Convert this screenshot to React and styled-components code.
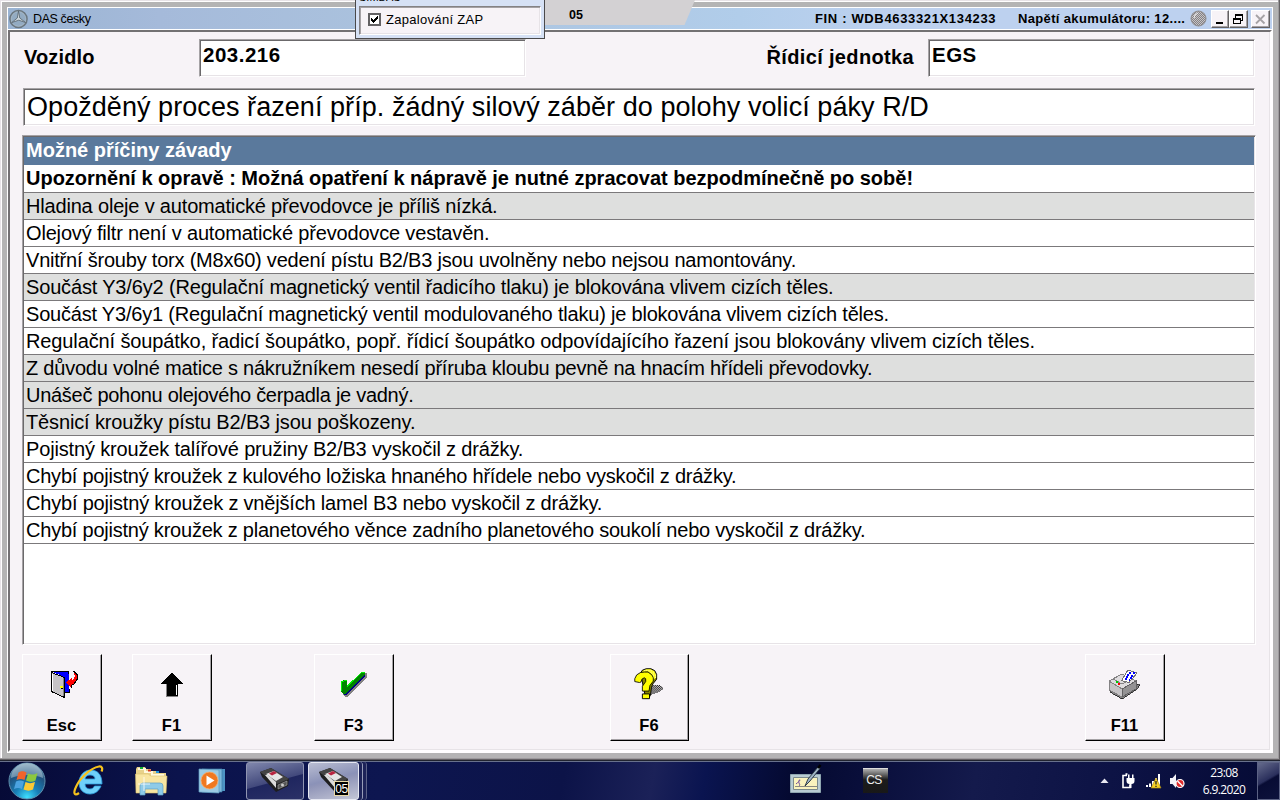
import React from 'react';
import styled, { createGlobalStyle } from 'styled-components';

const causes = [
  { text: 'Hladina oleje v automatické převodovce je příliš nízká.', tracking: -0.18, marked: true },
  { text: 'Olejový filtr není v automatické převodovce vestavěn.', tracking: -0.17 },
  { text: 'Vnitřní šrouby torx (M8x60) vedení pístu B2/B3 jsou uvolněny nebo nejsou namontovány.', tracking: -0.21 },
  { text: 'Součást Y3/6y2 (Regulační magnetický ventil řadicího tlaku) je blokována vlivem cizích těles.', tracking: -0.16, marked: true },
  { text: 'Součást Y3/6y1 (Regulační magnetický ventil modulovaného tlaku) je blokována vlivem cizích těles.', tracking: -0.2 },
  { text: 'Regulační šoupátko, řadicí šoupátko, popř. řídicí šoupátko odpovídajícího řazení jsou blokovány vlivem cizích těles.', tracking: -0.12 },
  { text: 'Z důvodu volné matice s nákružníkem nesedí příruba kloubu pevně na hnacím hřídeli převodovky.', tracking: -0.22, marked: true },
  { text: 'Unášeč pohonu olejového čerpadla je vadný.', tracking: -0.28, marked: true },
  { text: 'Těsnicí kroužky pístu B2/B3 jsou poškozeny.', tracking: -0.14, marked: true },
  { text: 'Pojistný kroužek talířové pružiny B2/B3 vyskočil z drážky.', tracking: -0.16 },
  { text: 'Chybí pojistný kroužek z kulového ložiska hnaného hřídele nebo vyskočil z drážky.', tracking: -0.23 },
  { text: 'Chybí pojistný kroužek z vnějších lamel B3 nebo vyskočil z drážky.', tracking: -0.19 },
  { text: 'Chybí pojistný kroužek z planetového věnce zadního planetového soukolí nebo vyskočil z drážky.', tracking: -0.22 },
];

export default function App() {
  return (
    <Desktop>
      <GlobalStyle />
      <Window>
        <TitleBar>
          <StarLogo />
          <AppName>DAS česky</AppName>
          <Fin>FIN : WDB4633321X134233</Fin>
          <Battery>Napětí akumulátoru: 12....</Battery>
          <Globe />
          <WinButtons>
            <WinButton>
              <svg width='14' height='14' shapeRendering='crispEdges'>
                <path d='M4 11h7v2H4z' fill='#000' />
              </svg>
            </WinButton>
            <WinButton $wide>
              <svg width='14' height='14' shapeRendering='crispEdges'>
                <path d='M5 3h8v2h-8zM5 5h1v2h-1zM12 5h1v5h-1zM11 9h1v1h-1zM3 7h8v2h-8zM3 9h1v4h-1zM10 9h1v4h-1zM3 12h8v1h-8z' fill='#000' />
              </svg>
            </WinButton>
            <WinButton $wide $apart>
              <svg width='14' height='14'>
                <path d='M4 4l8.500 8.500M12.500 4L4 12.500' stroke='#a5a2a5' strokeWidth='1.800' />
              </svg>
            </WinButton>
          </WinButtons>
        </TitleBar>
        <Client>
          <FieldRow>
            <Label>Vozidlo</Label>
            <Field>203.216</Field>
            <Label $right>Řídicí jednotka</Label>
            <Field>EGS</Field>
          </FieldRow>
          <Fault>Opožděný proces řazení příp. žádný silový záběr do polohy volicí páky R/D</Fault>
          <List>
            <ListHead>Možné příčiny závady</ListHead>
            <Notice>Upozornění k opravě : Možná opatření k nápravě je nutné zpracovat bezpodmínečně po sobě!</Notice>
            {causes.map((cause) => (
              <Row key={cause.text} $marked={cause.marked} $tracking={cause.tracking}>
                {cause.text}
              </Row>
            ))}
          </List>
          <Keys>
            <Key $gap={0}>
              <DoorIcon />
              Esc
            </Key>
            <Key $gap={30}>
              <ArrowIcon />
              F1
            </Key>
            <Key $gap={102}>
              <CheckIcon />
              F3
            </Key>
            <Key $gap={216} $width={79}>
              <QuestionIcon />
              F6
            </Key>
            <Key $gap={396}>
              <PrinterIcon />
              F11
            </Key>
          </Keys>
        </Client>
      </Window>
      <Tab>05</Tab>
      <Popup>
        <PopupTitle>SIMBAS</PopupTitle>
        <PopupBody>
          <CheckBox>
            <svg width='9' height='9' shapeRendering='crispEdges'>
              <path d='M1 3h1v1h1v1h1v-1h1v-1h1v-1h1v-1h1v3h-1v1h-1v1h-1v1h-1v1h-1v-1h-1v-1h-1z' fill='#000' />
            </svg>
          </CheckBox>
          Zapalování ZAP
        </PopupBody>
      </Popup>
      <Taskbar>
        <Launchers>
          <StartOrb />
          <ExplorerIcon />
          <FolderIcon />
          <PlayerIcon />
        </Launchers>
        <TaskButton>
          <DeviceIcon />
        </TaskButton>
        <TaskButton $active>
          <DeviceIcon />
          <TaskBadge>05</TaskBadge>
        </TaskButton>
        <StackEdge />
        <StackEdge $dim />
        <Spacer />
        <PenIcon />
        <Language>CS</Language>
        <Tray />
        <Clock>
          <span>23:08</span>
          <span>6.9.2020</span>
        </Clock>
        <ShowDesktop />
      </Taskbar>
    </Desktop>
  );
}

function StarLogo() {
  return (
    <svg width='20' height='20' viewBox='0 0 20 20' fill='none'>
      <circle cx='10.500' cy='10' r='8.400' fill='#93abc2' stroke='#6a767f' strokeWidth='1.800' />
      <circle cx='10.500' cy='10' r='7.400' stroke='#b9c8d4' strokeWidth='.6' />
      <path d='M10.500 2l1.300 7 5.700 4.500-6.700-2.300-7 2.300L9.300 9z' fill='#cdd6dc' stroke='#56626c' strokeWidth='.8' />
    </svg>
  );
}

function Globe() {
  return (
    <GlobeHolder>
      <svg width='17' height='17' viewBox='0 0 17 17'>
        <defs>
          <pattern id='dither' width='2' height='2' patternUnits='userSpaceOnUse'>
            <rect width='2' height='2' fill='#848284' />
            <rect width='1' height='1' fill='#c6c3c6' />
            <rect x='1' y='1' width='1' height='1' fill='#c6c3c6' />
          </pattern>
        </defs>
        <circle cx='8.500' cy='8.500' r='7.500' fill='url(#dither)' stroke='#8c8a8c' />
        <path d='M4 8l1-3 3-2' stroke='#eee' fill='none' />
      </svg>
    </GlobeHolder>
  );
}

function DoorIcon() {
  return (
    <svg width='40' height='38' viewBox='-4 0 40 38' shapeRendering='crispEdges'>
      <path d='M5 7h18v22h-5V13z' fill='#0000ff' />
      <path d='M5 7.500h17M22.500 7v3M19 28.500h4v-4' stroke='#000' fill='none' />
      <path d='M5.500 8.500l13 5v20l-13-6z' fill='#c6c3c6' stroke='#000' />
      <path d='M6.500 10v17' stroke='#fff' />
      <path d='M17.500 14v18' stroke='#848284' />
      <path d='M14 22h3v2h-3z' fill='#ff0' />
      <path d='M15 24.500h2' stroke='#000' />
      <path d='M26.500 7.500h2l2.500 3v5l-3 4-3 1.500v2.500l-5-5 5.500-4.500v2.500l2.500-1.500 1-3-1-3z' fill='#f00' />
      <path d='M26.500 7.500h1.500l3 3v5l-3 4.500-3 1.500v2.500' fill='none' stroke='#000' />
    </svg>
  );
}

function ArrowIcon() {
  return (
    <svg width='36' height='38' viewBox='0 0 36 38' shapeRendering='crispEdges'>
      <path d='M17 9l11 11h-4v12H12V20H6z' fill='#848284' />
      <path d='M18 8.500L29 20h-5v12H13V20H7z' fill='#000' />
      <path d='M22.500 21v10' stroke='#fff' />
      <path d='M12 32.500h12' stroke='#848284' />
    </svg>
  );
}

function CheckIcon() {
  return (
    <svg width='40' height='38' viewBox='-3 0 40 38' shapeRendering='crispEdges'>
      <path d='M7 27h3L28 9h2v4L11 33H8l-2-2z' fill='#848284' />
      <path d='M8 26L28 8v4L10 31H7z' fill='#000084' />
      <path d='M4 17l3-1h3v6L24 9l2-1h2v2L10 29l-2 1H6l-2-3z' fill='#008200' />
      <path d='M4.500 27V17.500h2l1-1h2M10 22.500L24.500 8.500H28' fill='none' stroke='#00f300' />
    </svg>
  );
}

function QuestionIcon() {
  return (
    <svg width='39' height='40' viewBox='.5 0 39 40'>
      <defs>
        <pattern id='shade' width='2' height='2' patternUnits='userSpaceOnUse'>
          <rect width='1' height='1' fill='#000' />
          <rect x='1' y='1' width='1' height='1' fill='#000' />
        </pattern>
        <pattern id='shine' width='2' height='2' patternUnits='userSpaceOnUse'>
          <rect width='2' height='2' fill='#ff0' />
          <rect width='1' height='1' fill='#fff' />
        </pattern>
      </defs>
      <path d='M21 23l8-1 5 2v3l-5 3-9 3z' fill='url(#shade)' shapeRendering='crispEdges' />
      <path d='M10.500 9.500l2-3 4-1.500h5l4 2 2 4v5l-4 5-1.500 4-1 8-2 3h-3z' fill='#848200' stroke='#000' />
      <path d='M12 8.500L14 6.500l3-1h4l4 2 2 4v3l-3 2-2-6-4-3z' fill='url(#shine)' />
      <path d='M4.500 18.500v-3l2-4 4-2.500 4-.500h4l4 3 1.500 3v3.500l-3.500 4.500-1 6h-7v-5l3.500-5v-3l-1.500-1-2.500 1.500-1 3-1.500.500z' fill='#ff0' stroke='#000' strokeWidth='.9' />
      <path d='M12.500 31.500h7.500v5h-7.500z' fill='#ff0' stroke='#000' />
    </svg>
  );
}

function PrinterIcon() {
  return (
    <svg width='42' height='38' viewBox='0 0 42 38' shapeRendering='crispEdges'>
      <path d='M31 20l5 1-3 4-15 10-12-7 3-3z' fill='#848284' stroke='#000' strokeWidth='.7' />
      <path d='M5 17l13-7 14 7-14 8z' fill='#dedbde' stroke='#848284' />
      <path d='M5 17l13 8v8L5 26z' fill='#c6c3c6' stroke='#848284' />
      <path d='M18 25l14-8v8l-14 8z' fill='#949294' stroke='#636163' />
      <path d='M9 15l9 5 10-5' stroke='#848284' fill='none' />
      <path d='M17.500 16.500L24 6l9 3-8 9.500z' fill='#fff' stroke='#737173' />
      <path d='M24.500 9h2m2 0h2m-8 2h2m2 1h2m-7 1h2m2 1h2m-7 1h2m2 1h1' stroke='#00f' strokeWidth='1.300' />
      <path d='M12 18h2' stroke='#0c0' strokeWidth='2' />
      <path d='M14 20h2' stroke='#f00' strokeWidth='2' />
    </svg>
  );
}

function StartOrb() {
  return (
    <svg width='38' height='38' viewBox='0 0 38 38'>
      <defs>
        <radialGradient id='orb' cx='.5' cy='.95' r='.95'>
          <stop offset='0' stopColor='#3fe0ff' />
          <stop offset='.35' stopColor='#1880b8' />
          <stop offset='.7' stopColor='#20527e' />
          <stop offset='1' stopColor='#7fa0b8' />
        </radialGradient>
      </defs>
      <circle cx='19' cy='19' r='18' fill='url(#orb)' stroke='#5f90ad' />
      <path d='M3 16a16 15 0 0 1 32 0c-9-4-22-4-32 0z' fill='#d8e8ee' opacity='.4' />
      <path d='M10.500 10.500c3-2 5-1.500 8 0l-2 7.500c-3-1.500-5-1.500-8 0z' fill='#f0642b' />
      <path d='M20 11.500c3 1.500 6 1.500 9.500-.5l-2 7.500c-3 2-6 1.500-9.500 0z' fill='#8cc83e' />
      <path d='M8 19.500c3-1.500 5-1.500 8 0L14 27c-3-1.500-5-1.500-8 0z' fill='#4ba3e0' />
      <path d='M17.500 20c3 1.500 6 1.500 9.500 0L25 27.500c-3 1.500-6 1.500-9.500 0z' fill='#fbc934' />
    </svg>
  );
}

function ExplorerIcon() {
  return (
    <svg width='32' height='32' viewBox='0 0 32 32' fill='none'>
      <path d='M28 21c-2 5-6 8-11 8C10 29 6 24 6 17.500S11 5 17.500 5C25 5 29 10 29 19H12c0 3 2 5 5 5 2 0 3.500-1 4.500-3zM12 14h10c0-2.500-2-4-5-4s-4.500 1.500-5 4z' fill='#6fd0fa' stroke='#2c9fe0' strokeWidth='.8' fillRule='evenodd' />
      <path d='M6 28c-4 3-6 1-3.500-5C6 14 17 3 26 1.500c3-.5 4 2 2.500 5' stroke='#f6c21c' strokeWidth='2.200' />
    </svg>
  );
}

function FolderIcon() {
  return (
    <svg width='34' height='32' viewBox='0 0 34 32'>
      <path d='M2 4l1-2h8l1 2h5v2h7l1 2h7v20H2z' fill='#e8d28a' />
      <path d='M4 4h7v3h7v3h12' fill='none' stroke='#fff8dc' strokeWidth='2' />
      <path d='M6 3h3' stroke='#15b035' strokeWidth='2' />
      <path d='M14 5.500h3' stroke='#d93a20' strokeWidth='2' />
      <path d='M22 7h3' stroke='#2391dc' strokeWidth='2' />
      <path d='M1.500 9h13l2 2H33l-1 17H2z' fill='#f8e5a1' stroke='#d9bf6c' strokeWidth='.6' />
      <path d='M6 30V21q0-3 3-3h17q3 0 3 3v9h-5v-6H11v6z' fill='#8fcbe8' stroke='#5c9fc5' strokeWidth='.7' />
      <path d='M10 12v14M4 19h12' stroke='#fff' strokeWidth='.8' />
    </svg>
  );
}

function PlayerIcon() {
  return (
    <svg width='28' height='28' viewBox='0 0 28 28'>
      <path d='M6 2h21v22H6z' fill='#4d94c4' />
      <path d='M4 2h20v23H4z' fill='#7cb9dc' stroke='#3c7ca8' strokeWidth='.7' />
      <path d='M1 2l20 1v23L1 25z' fill='#9ccbe4' stroke='#5f9cc0' strokeWidth='.7' />
      <circle cx='11.500' cy='13.500' r='8.500' fill='#f07820' stroke='#f8b070' strokeWidth='.8' />
      <path d='M8.500 8.500l8 5-8 5z' fill='#fff' />
    </svg>
  );
}

function DeviceIcon() {
  return (
    <svg width='34' height='30' viewBox='0 0 34 30'>
      <path d='M2 7l11-4 18 11-1 7-12 6L4 12z' fill='#1e1e20' />
      <path d='M2 7l11-4 18 11-12 5z' fill='#444' />
      <path d='M8 9l8-3 9 6-7 4z' fill='#e5e5e5' />
      <path d='M7 10l3 0 8 7v6z' fill='#dcdcdc' />
      <path d='M11 8.500l5-2.500 3 2-5 2.500z' fill='#b82440' />
      <path d='M20 20l9-4v4l-9 4z' fill='#555' stroke='#aaa' strokeWidth='.6' />
      <circle cx='24.500' cy='20' r='1.500' fill='#ccc' />
    </svg>
  );
}

function PenIcon() {
  return (
    <PenSvg width='32' height='31' viewBox='0 0 32 31'>
      <path d='M.5 11.500h30v18H.5z' fill='#b8cbd2' stroke='#8fa6b0' />
      <path d='M3.500 14.500h24v12h-24z' fill='#faf3bd' stroke='#7b8a8c' />
      <path d='M6 21c2-2 4-3 4-4s-2 1-1 3 1 2 0 3' stroke='#76519a' fill='none' />
      <path d='M5 23.500h22' stroke='#8a8a80' />
      <path d='M15 23l3-7L28 4l2 1.500L20 18z' fill='#9fb4c4' stroke='#24303c' strokeWidth='.9' />
      <path d='M28 5l2.500-3' stroke='#000' strokeWidth='2.500' />
    </PenSvg>
  );
}

function Tray() {
  return (
    <TraySvg width='94' height='20' viewBox='0 0 94 20'>
      <path d='M7.500 12l4-4.500 4 4.500z' fill='#e8e8f0' />
      <path d='M34 4.500h-4v12h7v-3M32.500 3h2' stroke='#fff' strokeWidth='1.600' fill='none' />
      <path d='M33.500 7h8v3q0 3-3 3v4h-2v-4q-3 0-3-3zM35 3.500h1.500V7H35zM39 3.500h1.500V7H39z' fill='#fff' />
      <path d='M53 14h2v2h-2zM56 12.500h2V16h-2zM59 10h2v6h-2zM62 7h2v9h-2zM65 3h2v13h-2z' fill='#fff' />
      <path d='M63 7l5 10H58z' fill='#f8d326' stroke='#a98612' strokeWidth='.7' />
      <path d='M63 10v3.500M63 14.700v1.200' stroke='#222' strokeWidth='1.300' />
      <path d='M77 7h2.500L83 3v14l-3.500-4H77z' fill='#f4f4f8' />
      <circle cx='87' cy='12.500' r='4' fill='#e02a2a' stroke='#fff' strokeWidth='1.200' />
      <path d='M84.500 10l5 5' stroke='#fff' strokeWidth='1.400' />
    </TraySvg>
  );
}

const GlobalStyle = createGlobalStyle`
  body {
    margin: 0;
    overflow: hidden;
  }
  svg {
    display: block;
    flex: none;
  }
`;

const Desktop = styled.div`
  position: relative;
  width: 1280px;
  height: 800px;
  overflow: hidden;
  font-family: 'Liberation Sans', Arial, sans-serif;
  color: #000;
`;

//window
const Window = styled.div`
  box-sizing: border-box;
  height: 760px;
  padding: 8px;
  background: #fff;
  box-shadow:
    inset -1px -1px 0 #636163,
    inset -2px -2px 0 #9c9a9c,
    inset 1px 1px 0 #e7e3e7,
    inset 0 0 0 2px #fff,
    inset 0 0 0 7px #b4b4b4;
`;

const TitleBar = styled.div`
  display: flex;
  align-items: center;
  height: 21px;
  margin-bottom: 1px;
  background: linear-gradient(90deg, #9ab4d3, #a5bada 12%, #abc3de 32%, #b1cdea 58%, #bdd1ef 70%, #bdd1ef);
`;

const AppName = styled.div`
  width: 782px;
  margin-left: 5px;
  font-size: 12.5px;
  letter-spacing: -0.4px;
`;

const Fin = styled.div`
  width: 203px;
  font-size: 13px;
  font-weight: bold;
  letter-spacing: 0.65px;
  white-space: nowrap;
`;

const Battery = styled.div`
  width: 172px;
  font-size: 13px;
  font-weight: bold;
  letter-spacing: 0.35px;
  white-space: nowrap;
`;

const GlobeHolder = styled.div`
  width: 21px;
`;

const WinButtons = styled.div`
  display: flex;
`;

const WinButton = styled.div`
  box-sizing: border-box;
  width: ${(props) => (props.$wide ? 19 : 18)}px;
  height: 18px;
  margin-left: ${(props) => (props.$apart ? 3 : 0)}px;
  background: #f7f3f7;
  border: 1px solid;
  border-color: #fff #636163 #636163 #fff;
  box-shadow: inset -1px -1px 0 #a5a2a5;
`;

const Client = styled.div`
  box-sizing: border-box;
  height: 722px;
  padding: 7px 13px 0 12px;
  background: #f7f3f7;
  border: solid;
  border-width: 2px;
  border-color: #737173 #fff #fff #737173;
  box-shadow: inset -1px -1px 0 #e7e3e7;
`;

const Sunken = styled.div`
  box-sizing: border-box;
  background: #fff;
  border: 1px solid;
  border-color: #a5a2a5 #fff #fff #a5a2a5;
  box-shadow: inset 1px 1px 0 #6b696b, inset -1px -1px 0 #e7e3e7;
`;

const FieldRow = styled.div`
  display: flex;
  margin-left: 2px;
`;

const Label = styled.div`
  box-sizing: border-box;
  width: ${(props) => (props.$right ? 402 : 175)}px;
  padding-right: ${(props) => (props.$right ? 14 : 0)}px;
  font-size: 20px;
  font-weight: bold;
  line-height: 36px;
  letter-spacing: ${(props) => (props.$right ? 0.35 : 0.15)}px;
  text-align: ${(props) => (props.$right ? 'right' : 'left')};
`;

const Field = styled(Sunken)`
  width: 327px;
  height: 38px;
  padding-left: 3px;
  font-size: 20.5px;
  font-weight: bold;
  line-height: 30px;
  letter-spacing: 0.5px;
`;

const Fault = styled(Sunken)`
  width: 1232px;
  height: 38px;
  margin: 11px 0 9px 1px;
  padding-left: 3px;
  font-size: 27px;
  line-height: 36px;
  letter-spacing: 0.06px;
  white-space: nowrap;
`;

const List = styled(Sunken)`
  width: 1234px;
  height: 510px;
  padding: 1px;
  font-size: 20px;
  white-space: nowrap;
`;

const ListHead = styled.div`
  height: 28px;
  padding-left: 2px;
  background: #5a799c;
  color: #fff;
  font-weight: bold;
  line-height: 27px;
`;

const Notice = styled.div`
  height: 27px;
  padding-left: 2px;
  border-bottom: 1px solid #7b797b;
  font-weight: bold;
  line-height: 27px;
  letter-spacing: -0.01px;
`;

const Row = styled.div`
  height: 26px;
  padding-left: 2px;
  background: ${(props) => (props.$marked ? '#dedfde' : '#fff')};
  border-bottom: 1px solid #7b797b;
  line-height: 27px;
  letter-spacing: ${(props) => props.$tracking}px;
`;

const Keys = styled.div`
  display: flex;
  margin-top: 9px;
`;

const Key = styled.div`
  box-sizing: border-box;
  display: flex;
  flex-direction: column;
  align-items: center;
  gap: 14px;
  width: ${(props) => props.$width || 80}px;
  height: 87px;
  margin-left: ${(props) => props.$gap}px;
  padding: 9px 1px 0 0;
  border: 1px solid;
  border-color: #fff #000 #000 #fff;
  box-shadow: inset -1px -1px 0 #a5a2a5;
  font-size: 16.500px;
  font-weight: bold;
  line-height: 18px;

  svg {
    height: 38px;
  }
`;

//overlays on the title bar
const Tab = styled.div`
  position: absolute;
  top: 0;
  left: 545px;
  box-sizing: border-box;
  width: 150px;
  height: 25px;
  padding-left: 24px;
  background: #d3d1d3;
  clip-path: polygon(0 0, 100% 0, 93% 100%, 0 100%);
  font-size: 12.500px;
  font-weight: bold;
  line-height: 30px;
`;

const Popup = styled.div`
  position: absolute;
  top: 0;
  left: 355px;
  box-sizing: border-box;
  width: 190px;
  height: 39px;
  padding: 0 3px;
  overflow: hidden;
  background: #d6e1f5;
  border: 1px solid #4a494a;
  border-top: 0;
`;

const PopupTitle = styled.div`
  height: 6px;
  margin-top: -3px;
  margin-bottom: 3px;
  font-size: 11px;
  line-height: 1px;
`;

const PopupBody = styled.div`
  display: flex;
  align-items: center;
  box-sizing: border-box;
  height: 29px;
  padding: 0 0 2px 8px;
  background: #f7f3f7;
  border: 1px solid;
  border-color: #848284 #fff #fff #848284;
  box-shadow: inset 1px 1px 0 #a5a2a5, inset -1px -1px 0 #e7e3e7;
  font-size: 13px;
  letter-spacing: 0.3px;
`;

const CheckBox = styled.div`
  width: 9px;
  height: 9px;
  margin-right: 5px;
  background: #fff;
  border: 2px solid #636163;
`;

//taskbar
const Taskbar = styled.div`
  display: flex;
  align-items: center;
  box-sizing: border-box;
  height: 40px;
  border-top: 1px solid #20232f;
  box-shadow: inset 0 1px 0 #68718c;
  background: linear-gradient(100deg, #060a36, #0b134c 14%, #0d1650 30%, #0c1348 44%, #1b2158 51%, #0a1450 55%, #040930 62%, #0a0f3c 68%, #141a4c 76%, #0c1244 88%, #050a34);
`;

const Launchers = styled.div`
  display: flex;
  align-items: center;
  box-sizing: border-box;
  width: 246px;
  padding-left: 8px;

  svg:nth-child(2) {
    margin-left: 27px;
  }
  svg:nth-child(3) {
    margin-left: 29px;
  }
  svg:nth-child(4) {
    margin-left: 30px;
  }
`;

const TaskButton = styled.div`
  position: relative;
  display: flex;
  justify-content: center;
  align-items: center;
  box-sizing: border-box;
  width: ${(props) => (props.$active ? 51 : 58)}px;
  height: 38px;
  margin-right: ${(props) => (props.$active ? 0 : 4)}px;
  padding-bottom: 2px;
  background: ${(props) =>
    props.$active
      ? 'linear-gradient(165deg, #b9bdd2 0, #8b92b8 45%, #9095b8 50%, #c3c6d6)'
      : 'linear-gradient(165deg, #8087ac 0, #42497c 50%, #1f265f 52%, #2b3167)'};
  border: 1px solid ${(props) => (props.$active ? '#e6e8f2' : '#9095b2')};
  border-radius: 3px;
`;

const TaskBadge = styled.div`
  position: absolute;
  right: 9px;
  bottom: 3px;
  width: 13px;
  height: 13px;
  background: #000;
  border: 1px solid #e8d9a8;
  color: #fff;
  font-size: 12px;
  line-height: 14px;
  text-align: center;
  letter-spacing: -0.5px;
`;

const StackEdge = styled.div`
  box-sizing: border-box;
  width: 4px;
  height: 38px;
  background: #1d2358;
  border-right: 1px solid ${(props) => (props.$dim ? '#5c6288' : '#989db8')};
  border-radius: 0 3px 3px 0;
`;

const Spacer = styled.div`
  width: 423px;
`;

const PenSvg = styled.svg`
  margin-top: -4px;
`;

const Language = styled.div`
  box-sizing: border-box;
  width: 25px;
  height: 25px;
  margin-left: 41px;
  padding-right: 3px;
  background: linear-gradient(#b0b0b0, #1c1c1c 45%, #181818);
  border-top: 1px solid #ddd;
  color: #eee;
  font-size: 12px;
  line-height: 23px;
  text-align: center;
  letter-spacing: -0.5px;
`;

const TraySvg = styled.svg`
  margin-left: 205px;
`;

const Clock = styled.div`
  display: flex;
  flex-direction: column;
  align-items: center;
  box-sizing: border-box;
  width: 70px;
  padding-left: 4px;
  color: #fff;
  font-family: 'Open Sans', 'Noto Sans', sans-serif;
  font-size: 12px;
  letter-spacing: -0.6px;
  line-height: 17px;
`;

const ShowDesktop = styled.div`
  box-sizing: border-box;
  width: 23px;
  height: 38px;
  margin-top: 1px;
  background: linear-gradient(150deg, #656b8c, #2a2f5c 45%, #080c34 50%, #0d123c);
  border: 1px solid #5c6284;
`;
